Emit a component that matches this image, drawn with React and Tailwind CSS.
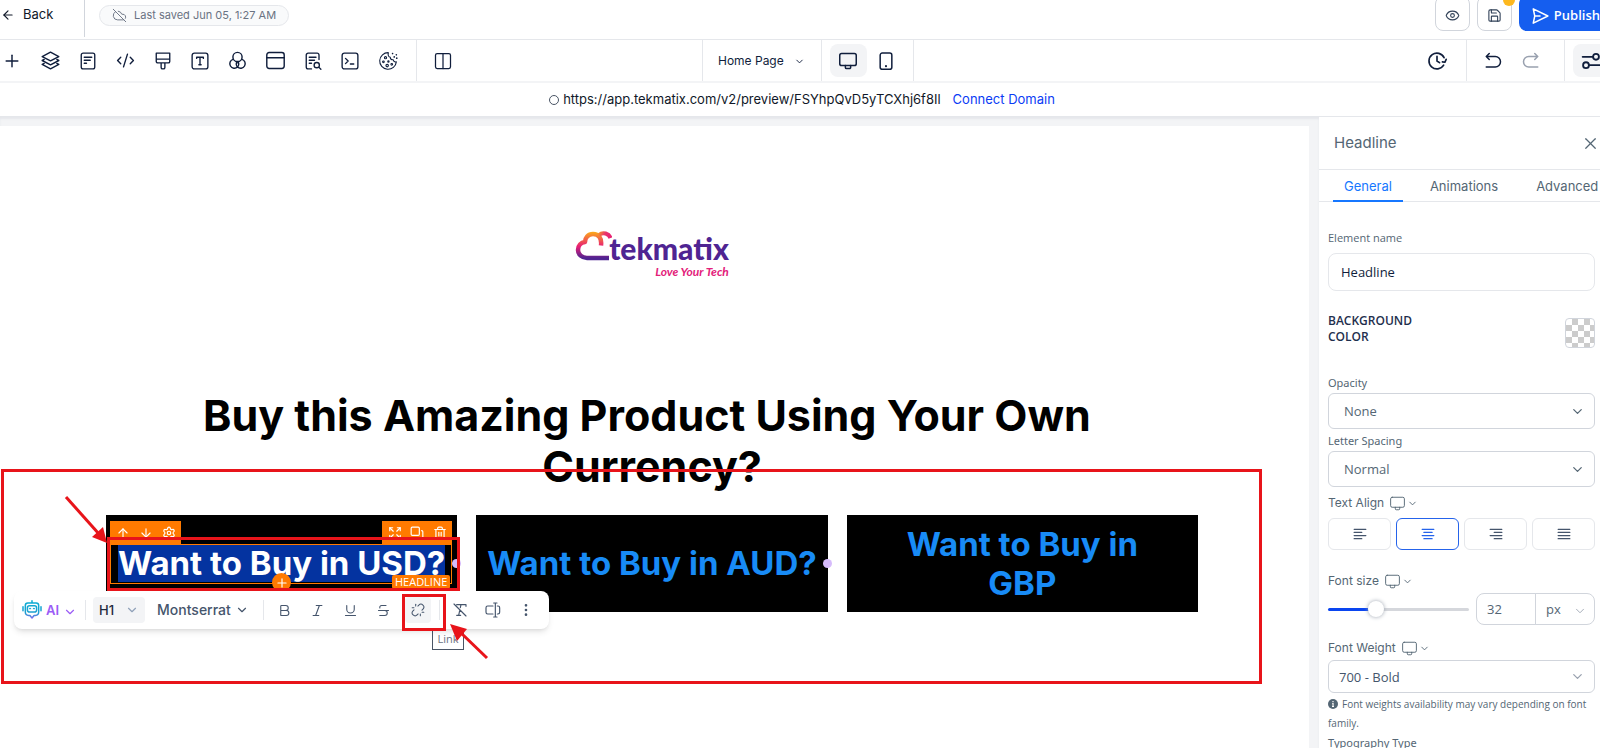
import { useState } from "react";
import clsx from "clsx";
import {
  ArrowDown, ArrowLeft, ArrowUp, Bold, ChevronDown, CloudOff, CodeXml, Columns2, Copy, EllipsisVertical, Expand,
  Eye, Italic, Plus, Save, Settings, Strikethrough, Trash2, Underline, Unlink, X,
} from "lucide-react";

function Icon({ size = 20, stroke = 1.5, className, children }) {
  return (
    <svg width={size} height={size} viewBox="0 0 24 24" fill="none" stroke="currentColor" strokeWidth={stroke}
      strokeLinecap="round" strokeLinejoin="round" className={className} aria-hidden="true">
      {children}
    </svg>
  );
}

const LayersIcon = () => (
  <Icon size={19} stroke={1.8}>
    <path d="M12 1.5 22.5 7 12 12.5 1.5 7z" />
    <path d="m4 10.7-2.5 1.3L12 17.5 22.5 12 20 10.7" />
    <path d="m4 15.7-2.5 1.3L12 22.5 22.5 17 20 15.7" />
  </Icon>
);

const PageIcon = () => (
  <Icon size={18} stroke={1.8}>
    <rect x="3" y="1.5" width="18" height="21" rx="2.5" />
    <path d="M7 7h10M7 11h8M7 15h3" />
  </Icon>
);

const BrushIcon = () => (
  <Icon size={18} stroke={1.8}>
    <path d="M3 1.5h18v11a2 2 0 0 1-2 2H5a2 2 0 0 1-2-2zM3 9.5h18M9.5 14.5v6a2 2 0 0 0 2 2h1a2 2 0 0 0 2-2v-6" />
  </Icon>
);

const TextIcon = () => (
  <Icon size={18} stroke={1.8}>
    <rect x="1.5" y="1.5" width="21" height="21" rx="3" />
    <path d="M7.5 8.5V7h9v1.5M12 7v10M10.5 17h3" />
  </Icon>
);

const CirclesIcon = () => (
  <Icon size={19} stroke={1.8}>
    <circle cx="12" cy="7.5" r="5.8" />
    <path d="M6.3 10.5a5.8 5.8 0 1 0 5.7 9.8 5.8 5.8 0 1 0 5.7-9.8" />
    <path d="M12 20.3a5.8 5.8 0 0 0 .8-6.5M12 20.3a5.8 5.8 0 0 1-.8-6.500" />
  </Icon>
);

const WindowIcon = () => (
  <Icon size={19} stroke={1.8}>
    <rect x="1" y="2" width="22" height="20" rx="3" />
    <path d="M1 8.5h22" />
  </Icon>
);

const PageSearchIcon = () => (
  <Icon size={18} stroke={1.8}>
    <path d="M20 10V4a2.5 2.5 0 0 0-2.5-2.5h-12A2.5 2.5 0 0 0 3 4v16a2.5 2.5 0 0 0 2.5 2.5H10M7 7h9M7 11h7M7 15h3" />
    <circle cx="17" cy="17.5" r="3.5" />
    <path d="m20 20.5 2.5 2.5" />
  </Icon>
);

const TerminalIcon = () => (
  <Icon size={18} stroke={1.8}>
    <rect x="1.5" y="1.5" width="21" height="21" rx="3" />
    <path d="m6 8.5 3.5 3.5L6 15.5M12.5 16H17" />
  </Icon>
);

const CookieIcon = () => (
  <Icon stroke={1.3}>
    <path d="M12.5 2A10 10 0 1 0 22 13c-2 .5-3.500-.5-3.700-2.500-2 .4-3.800-1-3.500-3-2 0-3.300-2.500-2.300-5.500z" />
    <circle cx="9" cy="8" r="1.3" />
    <circle cx="6.5" cy="13" r="1" />
    <circle cx="11" cy="17.5" r="1.5" />
    <circle cx="12.5" cy="12.5" r=".8" />
    <circle cx="16.5" cy="16" r="1" />
    <path d="M17.5 3v.1M22 4.500v.1M19.500 7v.1M22.500 8.500v.1" strokeWidth="2" />
  </Icon>
);

const DesktopIcon = ({ size = 20, stroke = 1.8 }) => (
  <Icon size={size} stroke={stroke}>
    <rect x="1" y="2" width="22" height="16" rx="2.5" />
    <path d="M8.5 18v2.500a1.500 1.500 0 0 0 1.500 1.500h4a1.500 1.500 0 0 0 1.500-1.500V18" />
  </Icon>
);

const MobileIcon = () => (
  <Icon stroke={1.8}>
    <rect x="5" y="2.5" width="14" height="19.5" rx="2.5" />
    <path d="M12 18v.2" strokeWidth="2.5" />
  </Icon>
);

const HistoryIcon = () => (
  <Icon stroke={2}>
    <path d="M20.5 8A9.500 9.500 0 1 0 20 17" />
    <path d="M12 6.500V12l3 2M18.500 13l3 .5 1.500-3.500" />
  </Icon>
);

const UndoIcon = ({ className }) => (
  <Icon size={18} stroke={2} className={className}>
    <path d="M7 2 3 6l4 4M3 6h12a7 7 0 0 1 0 14H3" />
  </Icon>
);

const SlidersIcon = () => (
  <Icon stroke={2.2}>
    <path d="M2 7h12M10 17h13" />
    <circle cx="18" cy="7" r="3.5" />
    <circle cx="6" cy="17" r="3.5" />
  </Icon>
);

const ClearFormatIcon = () => (
  <Icon size={16} stroke={1.75}>
    <path d="M7 4h14v2.500M13.500 4l-1 4.500M11.500 13 10 20M7 20h6M3 3l18 18" />
  </Icon>
);

const InsertFieldIcon = () => (
  <Icon size={16} stroke={1.75}>
    <path d="M12 6H4a2.500 2.500 0 0 0-2.500 2.500v7A2.500 2.500 0 0 0 4 18h8M18.500 6h1A2.500 2.500 0 0 1 22 8.500v7a2.500 2.500 0 0 1-2.500 2.500h-1M15.500 2v20M13 1.500h5M13 22.500h5" />
  </Icon>
);

const RobotIcon = () => (
  <svg width="20" height="20" viewBox="0 0 24 24" fill="none" strokeWidth="1.8" strokeLinecap="round" strokeLinejoin="round" aria-hidden="true">
    <defs>
      <linearGradient id="robot" x1="0" y1="0" x2="0" y2="24" gradientUnits="userSpaceOnUse">
        <stop offset="0" stopColor="#06aed4" />
        <stop offset=".65" stopColor="#1fa0d0" />
        <stop offset="1" stopColor="#9b5cf6" />
      </linearGradient>
    </defs>
    <g stroke="url(#robot)">
      <path d="M7 3.500h10a3 3 0 0 1 3 3v8a4 4 0 0 1-4 4h-1.500L12 21.500l-2.500-3H8a4 4 0 0 1-4-4v-8a3 3 0 0 1 3-3zM12 1v2.500M1.200 8v5M22.800 8v5" />
      <rect x="6.5" y="7" width="11" height="7.5" rx="2.5" />
      <path d="M9 10.500q.7-1 1.400 0M13.600 10.500q.7-1 1.400 0" strokeWidth="1.4" />
    </g>
  </svg>
);

const tools = [
  { name: "Add", icon: <Plus size={20} strokeWidth={1.75} /> },
  { name: "Layers", icon: <LayersIcon /> },
  { name: "Pages", icon: <PageIcon /> },
  { name: "Custom code", icon: <CodeXml size={19} strokeWidth={1.75} /> },
  { name: "Styles", icon: <BrushIcon /> },
  { name: "Typography", icon: <TextIcon /> },
  { name: "Colors", icon: <CirclesIcon /> },
  { name: "Popup", icon: <WindowIcon /> },
  { name: "SEO", icon: <PageSearchIcon /> },
  { name: "Tracking code", icon: <TerminalIcon /> },
  { name: "Cookies", icon: <CookieIcon /> },
];

function TopBar() {
  return (
    <header className="h-10 shrink-0 border-b border-gray-200 flex items-start overflow-hidden">
      <a href="#back" className="h-[37px] w-[85px] border-r border-gray-300 flex items-center gap-2 pl-px pb-2 text-[13px] text-gray-900">
        <ArrowLeft size={14} />
        Back
      </a>
      <div className="mt-[5px] ml-[14px] h-[21px] px-3 border border-gray-200 rounded-full bg-gray-50 flex items-center gap-[7px] text-[11px] text-gray-500">
        <CloudOff size={15} strokeWidth={1.5} />
        Last saved Jun 05, 1:27 AM
      </div>
      <div className="ml-auto flex gap-[7px] -mt-1">
        <button aria-label="Preview" className="size-[35px] border border-gray-300 rounded-lg flex items-center justify-center pt-1 text-slate-700">
          <Eye size={15} strokeWidth={1.75} />
        </button>
        <button aria-label="Save" className="relative size-[35px] border border-gray-300 rounded-lg flex items-center justify-center pt-1 text-slate-700">
          <Save size={15} strokeWidth={1.75} />
          <span className="absolute -top-[3px] -right-1 size-3 rounded-full bg-[#fdb81e]" />
        </button>
        <button className="h-[35px] pl-3 pt-1 rounded-l-lg bg-[#155eef] text-white text-[13px] font-semibold font-['Open_Sans',sans-serif] flex items-center gap-[5px]">
          <Icon size={18} stroke={2} className="shrink-0">
            <path d="M3 2.500 22.500 12 3 21.500l2-9.500zM5 12h7" />
          </Icon>
          Publish
        </button>
      </div>
    </header>
  );
}

function ToolRow() {
  const [device, setDevice] = useState("desktop");
  return (
    <div className="h-[43px] shrink-0 border-b-2 border-gray-100 grid grid-cols-[44fr_auto_43fr] text-[#101e3c]">
      <div className="flex items-center">
        <div className="flex items-center justify-between w-[417px] pl-[2px] pr-[18px] h-full border-r border-gray-200">
          {tools.map((tool) => (
            <button key={tool.name} aria-label={tool.name}>
              {tool.icon}
            </button>
          ))}
        </div>
        <button aria-label="Layout" className="ml-4">
          <Columns2 size={20} strokeWidth={1.5} />
        </button>
      </div>
      <div className="flex items-center border-x border-gray-200">
        <div className="relative h-full w-[119px] border-r border-gray-200 text-xs">
          <select aria-label="Page" className="appearance-none block w-full h-full pl-[15px]">
            <option>Home Page</option>
          </select>
          <ChevronDown size={11} className="absolute right-4 top-4 pointer-events-none" />
        </div>
        <div className="flex gap-px px-2">
          <button
            aria-label="Desktop"
            onClick={() => setDevice("desktop")}
            className={clsx("w-[37px] h-[33px] rounded-lg flex items-center justify-center", device === "desktop" && "bg-gray-100")}
          >
            <DesktopIcon size={18} stroke={2} />
          </button>
          <button
            aria-label="Mobile"
            onClick={() => setDevice("mobile")}
            className={clsx("w-[37px] h-[33px] rounded-lg flex items-center justify-center", device === "mobile" && "bg-gray-100")}
          >
            <MobileIcon />
          </button>
        </div>
      </div>
      <div className="flex items-center justify-end">
        <button aria-label="Version history" className="mr-[19px]"><HistoryIcon /></button>
        <div className="flex items-center gap-5 h-full border-x border-gray-200 pl-[17px] pr-6 mr-2">
          <button aria-label="Undo"><UndoIcon /></button>
          <button aria-label="Redo" className="text-gray-400"><UndoIcon className="-scale-x-100" /></button>
        </div>
        <button aria-label="Settings" className="w-[27px] h-[33px] pl-2 rounded-l-lg bg-gray-100 flex items-center overflow-hidden">
          <span className="shrink-0"><SlidersIcon /></span>
        </button>
      </div>
    </div>
  );
}

function TekmatixLogo() {
  return (
    <div className="flex items-start h-[46px] justify-center">
      <svg width="37" height="32" viewBox="0 0 37 32" fill="none" strokeWidth="4.5" strokeLinejoin="round" aria-hidden="true">
        <defs>
          <linearGradient id="cloud" x1="12" y1="2" x2="12" y2="31" gradientUnits="userSpaceOnUse">
            <stop offset="0" stopColor="#fba919" />
            <stop offset=".5" stopColor="#e81e75" />
            <stop offset=".9" stopColor="#4f2492" />
          </linearGradient>
          <linearGradient id="puff" x1="22" y1="2" x2="36" y2="10" gradientUnits="userSpaceOnUse">
            <stop offset="0" stopColor="#fba919" />
            <stop offset=".5" stopColor="#e8336d" />
            <stop offset="1" stopColor="#e81e75" />
          </linearGradient>
        </defs>
        <path d="M34 28H12c-5 0-9-3.500-9-8s3-7.500 7-8c0-4 3-8 8-8 5.500 0 9 4 8 11.500" stroke="url(#cloud)" />
        <path d="M24 5c4-3.500 10-1.500 11.500 3" stroke="url(#puff)" strokeWidth="4" />
      </svg>
      <div className="-ml-[3px] flex flex-col items-end font-['Lato',sans-serif]">
        <span className="text-[30px] leading-9 font-black text-[#4f2492]">tekmatix</span>
        <span className="text-xs leading-3 font-bold italic text-[#e3207a]">Love Your Tech</span>
      </div>
    </div>
  );
}

function HeadlineHandles() {
  return (
    <>
      <div className="absolute left-1 top-[6px] h-[23px] w-[71px] bg-[#ff7a00] text-white flex items-center justify-around px-px">
        <button aria-label="Move up"><ArrowUp size={14} className="block" /></button>
        <button aria-label="Move down"><ArrowDown size={14} className="block" /></button>
        <button aria-label="Settings"><Settings size={14} className="block" /></button>
      </div>
      <div className="absolute right-[5px] top-[6px] h-[23px] w-[70px] bg-[#ff7a00] text-white flex items-center justify-around px-px">
        <button aria-label="Expand"><Expand size={14} className="block" /></button>
        <button aria-label="Duplicate"><Copy size={14} className="block -scale-100" /></button>
        <button aria-label="Delete"><Trash2 size={14} className="block" /></button>
      </div>
      <div className="absolute left-1 right-[5px] top-[29px] h-10 border border-[#ff7a00] pointer-events-none" />
      <button aria-label="Add element" className="absolute left-[166px] top-[58px] size-[19px] rounded-full bg-[#ff7a00] text-white flex items-center justify-center">
        <Plus size={14} />
      </button>
      <span className="absolute right-[7px] top-[60px] h-[14px] px-[3px] rounded-xs bg-[#ff7a00] text-white text-[11px] leading-[14px] font-medium font-['Open_Sans',sans-serif]">
        HEADLINE
      </span>
    </>
  );
}

const formatButtons = [
  { name: "Bold", Glyph: Bold },
  { name: "Italic", Glyph: Italic },
  { name: "Underline", Glyph: Underline },
  { name: "Strikethrough", Glyph: Strikethrough },
];

function TextToolbar() {
  return (
    <div className="absolute -left-[92px] top-[76px] z-10 h-[38px] w-[535px] bg-white rounded-lg shadow-md flex items-center text-[13px] leading-5 text-slate-600">
      <button className="ml-2 flex items-center gap-1 font-semibold text-[#9b5cf6]">
        <RobotIcon />
        AI
        <ChevronDown size={14} className="mt-1" />
      </button>
      <span className="h-5 w-px bg-gray-200 ml-2 mr-[7px]" />
      <div className="relative">
        <select aria-label="Heading level" className="appearance-none block h-[26px] w-[52px] pl-[6px] rounded bg-gray-100 font-medium text-slate-800">
          <option>H1</option>
        </select>
        <ChevronDown size={14} className="absolute right-[6px] top-[6px] pointer-events-none text-slate-400" />
      </div>
      <div className="relative ml-3">
        <select aria-label="Font family" className="appearance-none block h-[26px] w-[92px] text-sm font-medium">
          <option>Montserrat</option>
        </select>
        <ChevronDown size={14} className="absolute right-0 top-[6px] pointer-events-none" />
      </div>
      <span className="h-5 w-px bg-gray-200 ml-[14px] mr-[13px]" />
      <div className="flex gap-[18px]">
        {formatButtons.map(({ name, Glyph }) => (
          <button key={name} aria-label={name}><Glyph size={15} strokeWidth={1.75} /></button>
        ))}
      </div>
      <button aria-label="Link" className="ml-[14px] size-[26px] rounded bg-gray-100 flex items-center justify-center">
        <Unlink size={14} strokeWidth={1.75} />
      </button>
      <span className="h-5 w-px bg-gray-200 ml-2 mr-3" />
      <div className="flex items-center gap-[17px]">
        <button aria-label="Clear formatting"><ClearFormatIcon /></button>
        <button aria-label="Insert field"><InsertFieldIcon /></button>
        <button aria-label="More"><EllipsisVertical size={16} /></button>
      </div>
    </div>
  );
}

function Annotations() {
  return (
    <div className="absolute inset-0 z-20 pointer-events-none">
      <div className="absolute left-px right-[47px] top-[343px] h-[215px] border-3 border-[#e8141a]" />
      <div className="absolute left-[107px] top-[411px] w-[353px] h-[54px] border-3 border-[#e8141a]" />
      <div className="absolute left-[402px] top-[468px] w-[44px] h-[37px] border-3 border-[#e8141a]" />
      <svg width="44" height="50" viewBox="0 0 44 50" className="absolute left-[64px] top-[369px]" aria-hidden="true">
        <path d="M2 2l33 37" stroke="#e8141a" strokeWidth="3" />
        <path d="M43 48 28 42l11-10z" fill="#e8141a" />
      </svg>
      <svg width="42" height="38" viewBox="0 0 42 38" className="absolute left-[448px] top-[497px]" aria-hidden="true">
        <path d="M39 35 12 9" stroke="#e8141a" strokeWidth="3" />
        <path d="M2 1l17 5L9 18z" fill="#e8141a" />
      </svg>
    </div>
  );
}

const dot = "absolute -right-1 top-11 size-[9px] rounded-full bg-[#d6bbfb]";

function Canvas() {
  return (
    <main className="flex-1 min-w-0 bg-gray-100 pt-[9px] pr-[10px] shadow-[inset_0_2px_2px_#e5e7eb]">
      <div className="relative h-full bg-white pl-[106px] pr-[111px] pt-[104px]">
        <TekmatixLogo />
        <h1 className="mt-[114px] text-center text-[43px] leading-[51px] font-bold text-black">
          Buy this Amazing Product Using Your Own&nbsp;
          <br />
          Currency?
        </h1>
        <div className="mt-[23px] grid grid-cols-3 gap-[19px] text-center text-[33px] leading-[39px] font-bold text-[#188bf6]">
          <div className="relative h-[97px] bg-black flex items-center justify-center">
            <h2 className="bg-[#0433a0] text-white leading-[37px] whitespace-nowrap">Want to Buy in USD?</h2>
            <HeadlineHandles />
            <span className={dot} />
            <TextToolbar />
            <span role="tooltip" className="absolute left-[326px] top-[113px] border border-gray-600 bg-white w-8 h-[22px] text-[11px] leading-5 font-normal text-gray-500 font-['Open_Sans',sans-serif]">
              Link
            </span>
          </div>
          <div className="relative h-[97px] bg-black flex items-center justify-center">
            <h2 className="whitespace-nowrap">Want to Buy in AUD?</h2>
            <span className={dot} />
          </div>
          <div className="h-[97px] bg-black flex items-center justify-center px-10">
            <h2>Want to Buy in GBP</h2>
          </div>
        </div>
        <Annotations />
      </div>
    </main>
  );
}

function PanelSelect({ id, value, className, arrow }) {
  return (
    <div className="relative">
      <select id={id} className={clsx("appearance-none block w-full border border-gray-300 rounded-md text-[13px] font-['Open_Sans',sans-serif]", className)}>
        <option>{value}</option>
      </select>
      <ChevronDown size={15} className={clsx("absolute right-[10px] inset-y-0 my-auto pointer-events-none", arrow)} />
    </div>
  );
}

function DeviceLabel({ htmlFor, children }) {
  return (
    <div className="flex items-center h-4 text-xs">
      <label htmlFor={htmlFor}>{children}</label>
      <button aria-label={children + " device"} className="ml-[6px] flex items-center gap-[2px]">
        <DesktopIcon size={15} stroke={1.5} />
        <ChevronDown size={11} />
      </button>
    </div>
  );
}

const aligns = [
  { name: "Left", d: "M2 4h20M2 9.300h13M2 14.600h20M2 20h13" },
  { name: "Center", d: "M2 4h20M5 9.300h14M2 14.600h20M5 20h14" },
  { name: "Right", d: "M2 4h20M9 9.300h13M2 14.600h20M9 20h13" },
  { name: "Justify", d: "M2 4h20M2 9.300h20M2 14.600h20M2 20h20" },
];

function SettingsPanel() {
  const [tab, setTab] = useState("General");
  const [align, setAlign] = useState("Center");
  const [size, setSize] = useState(32);

  return (
    <aside className="w-[281px] shrink-0 bg-white text-[#546674] overflow-hidden">
      <div className="h-[53px] border-b border-gray-200 flex items-center justify-between pl-[15px]">
        <h2 className="text-[15px]">Headline</h2>
        <button aria-label="Close"><X size={19} strokeWidth={1.5} /></button>
      </div>
      <div role="tablist" className="h-8 border-b border-gray-200 flex gap-4 pl-[14px] text-[13px]">
        {["General", "Animations", "Advanced"].map((t) => (
          <button
            key={t}
            role="tab"
            aria-selected={t === tab}
            onClick={() => setTab(t)}
            className={clsx("h-8 pt-1 border-b-2", t === "Advanced" ? "pl-[11px]" : "px-[11px]", t === tab ? "border-[#1677ff] text-[#1677ff]" : "border-transparent")}
          >
            {t}
          </button>
        ))}
      </div>

      <div className="pl-[9px] pr-[5px] pt-7 text-[11px] leading-4">
        <label htmlFor="name" className="block font-['Open_Sans',sans-serif]">Element name</label>
        <input
          id="name"
          defaultValue="Headline"
          className="mt-[7px] block w-full h-[38px] px-3 border border-gray-200 rounded-lg text-[13px] text-[#101e3c] font-['Open_Sans',sans-serif]"
        />
        <div className="mt-[22px] flex items-start justify-between">
          <span className="w-[100px] text-xs leading-4 font-semibold text-[#1f2f4d] font-['Open_Sans',sans-serif]">BACKGROUND COLOR</span>
          <button
            aria-label="Background color"
            className="mt-[5px] size-[30px] rounded border border-gray-300 bg-[repeating-conic-gradient(#cccccc_0_25%,#ffffff_0_50%)] bg-size-[12px_12px]"
          />
        </div>
        <label htmlFor="opacity" className="mt-[27px] block font-['Noto_Sans',sans-serif]">Opacity</label>
        <div className="mt-[2px]"><PanelSelect id="opacity" value="None" className="h-9 pl-[15px]" /></div>
        <label htmlFor="spacing" className="mt-1 block font-['Noto_Sans',sans-serif]">Letter Spacing</label>
        <div className="mt-[2px]"><PanelSelect id="spacing" value="Normal" className="h-9 pl-[15px]" /></div>

        <div className="mt-2"><DeviceLabel>Text Align</DeviceLabel></div>
        <div className="mt-[7px] grid grid-cols-4 gap-[5px]">
          {aligns.map(({ name, d }) => (
            <button
              key={name}
              aria-label={name}
              onClick={() => setAlign(name)}
              className={clsx("h-8 rounded-md border flex items-center justify-center", name === align ? "border-[#2563eb] text-[#2563eb]" : "border-gray-200 text-slate-600")}
            >
              <Icon size={14} stroke={2.2}><path d={d} /></Icon>
            </button>
          ))}
        </div>

        <div className="mt-[23px]"><DeviceLabel htmlFor="size">Font size</DeviceLabel></div>
        <div className="mt-1 flex items-center">
          <input
            type="range"
            aria-label="Font size slider"
            min="0"
            max="100"
            value={size}
            onChange={(e) => setSize(Number(e.target.value))}
            style={{ backgroundImage: `linear-gradient(to right, #0a45f0 ${size}%, #d5d7dc ${size}%)` }}
            className="flex-1 min-w-0 h-[3px] mr-[7px] rounded appearance-none [&::-webkit-slider-thumb]:appearance-none [&::-webkit-slider-thumb]:size-4 [&::-webkit-slider-thumb]:rounded-full [&::-webkit-slider-thumb]:bg-white [&::-webkit-slider-thumb]:shadow-[0_0_4px_#9ca3af]"
          />
          <input
            id="size"
            value={size}
            onChange={(e) => setSize(Number(e.target.value) || 0)}
            className="w-[60px] h-8 pl-[10px] border border-gray-300 rounded-l-lg text-[13px] font-['Open_Sans',sans-serif]"
          />
          <div className="relative -ml-px">
            <select aria-label="Unit" className="appearance-none block w-[60px] h-8 pl-[10px] border border-gray-300 rounded-r-lg text-[13px] font-['Open_Sans',sans-serif]">
              <option>px</option>
            </select>
            <ChevronDown size={14} strokeWidth={1.5} className="absolute right-2 top-[11px] pointer-events-none text-gray-400" />
          </div>
        </div>

        <div className="mt-[15px]"><DeviceLabel htmlFor="weight">Font Weight</DeviceLabel></div>
        <div className="mt-1"><PanelSelect id="weight" value="700 - Bold" className="h-[33px] pl-[10px] text-slate-600" arrow="text-gray-400" /></div>
        <p className="mt-[2px] text-[10px] leading-[19px] font-['Open_Sans',sans-serif]">
          <svg width="10" height="10" viewBox="0 0 10 10" className="inline mr-1 align-[-1px]" aria-hidden="true">
            <circle cx="5" cy="5" r="5" fill="currentColor" />
            <path d="M5 2v1.200M4.200 4.700H5v2.800M4 7.500h2" stroke="#fff" strokeWidth="1.2" />
          </svg>
          Font weights availability may vary depending on font family.
        </p>
        <span className="block mt-[2px] font-['Noto_Sans',sans-serif]">Typography Type</span>
      </div>
    </aside>
  );
}

export default function App() {
  return (
    <div className="h-screen flex flex-col overflow-hidden bg-white font-['Inter',sans-serif]">
      <TopBar />
      <ToolRow />
      <div className="h-[34px] shrink-0 border-b border-gray-200 flex items-center justify-center gap-1 pl-1 text-[13px] text-gray-900">
        <span className="size-[10px] rounded-full border border-gray-600" />
        <span>https://app.tekmatix.com/v2/preview/FSYhpQvD5yTCXhj6f8Il</span>
        <a href="#domain" className="ml-2 text-[#0a3cf5]">Connect Domain</a>
      </div>
      <div className="flex-1 min-h-0 flex">
        <Canvas />
        <SettingsPanel />
      </div>
    </div>
  );
}
